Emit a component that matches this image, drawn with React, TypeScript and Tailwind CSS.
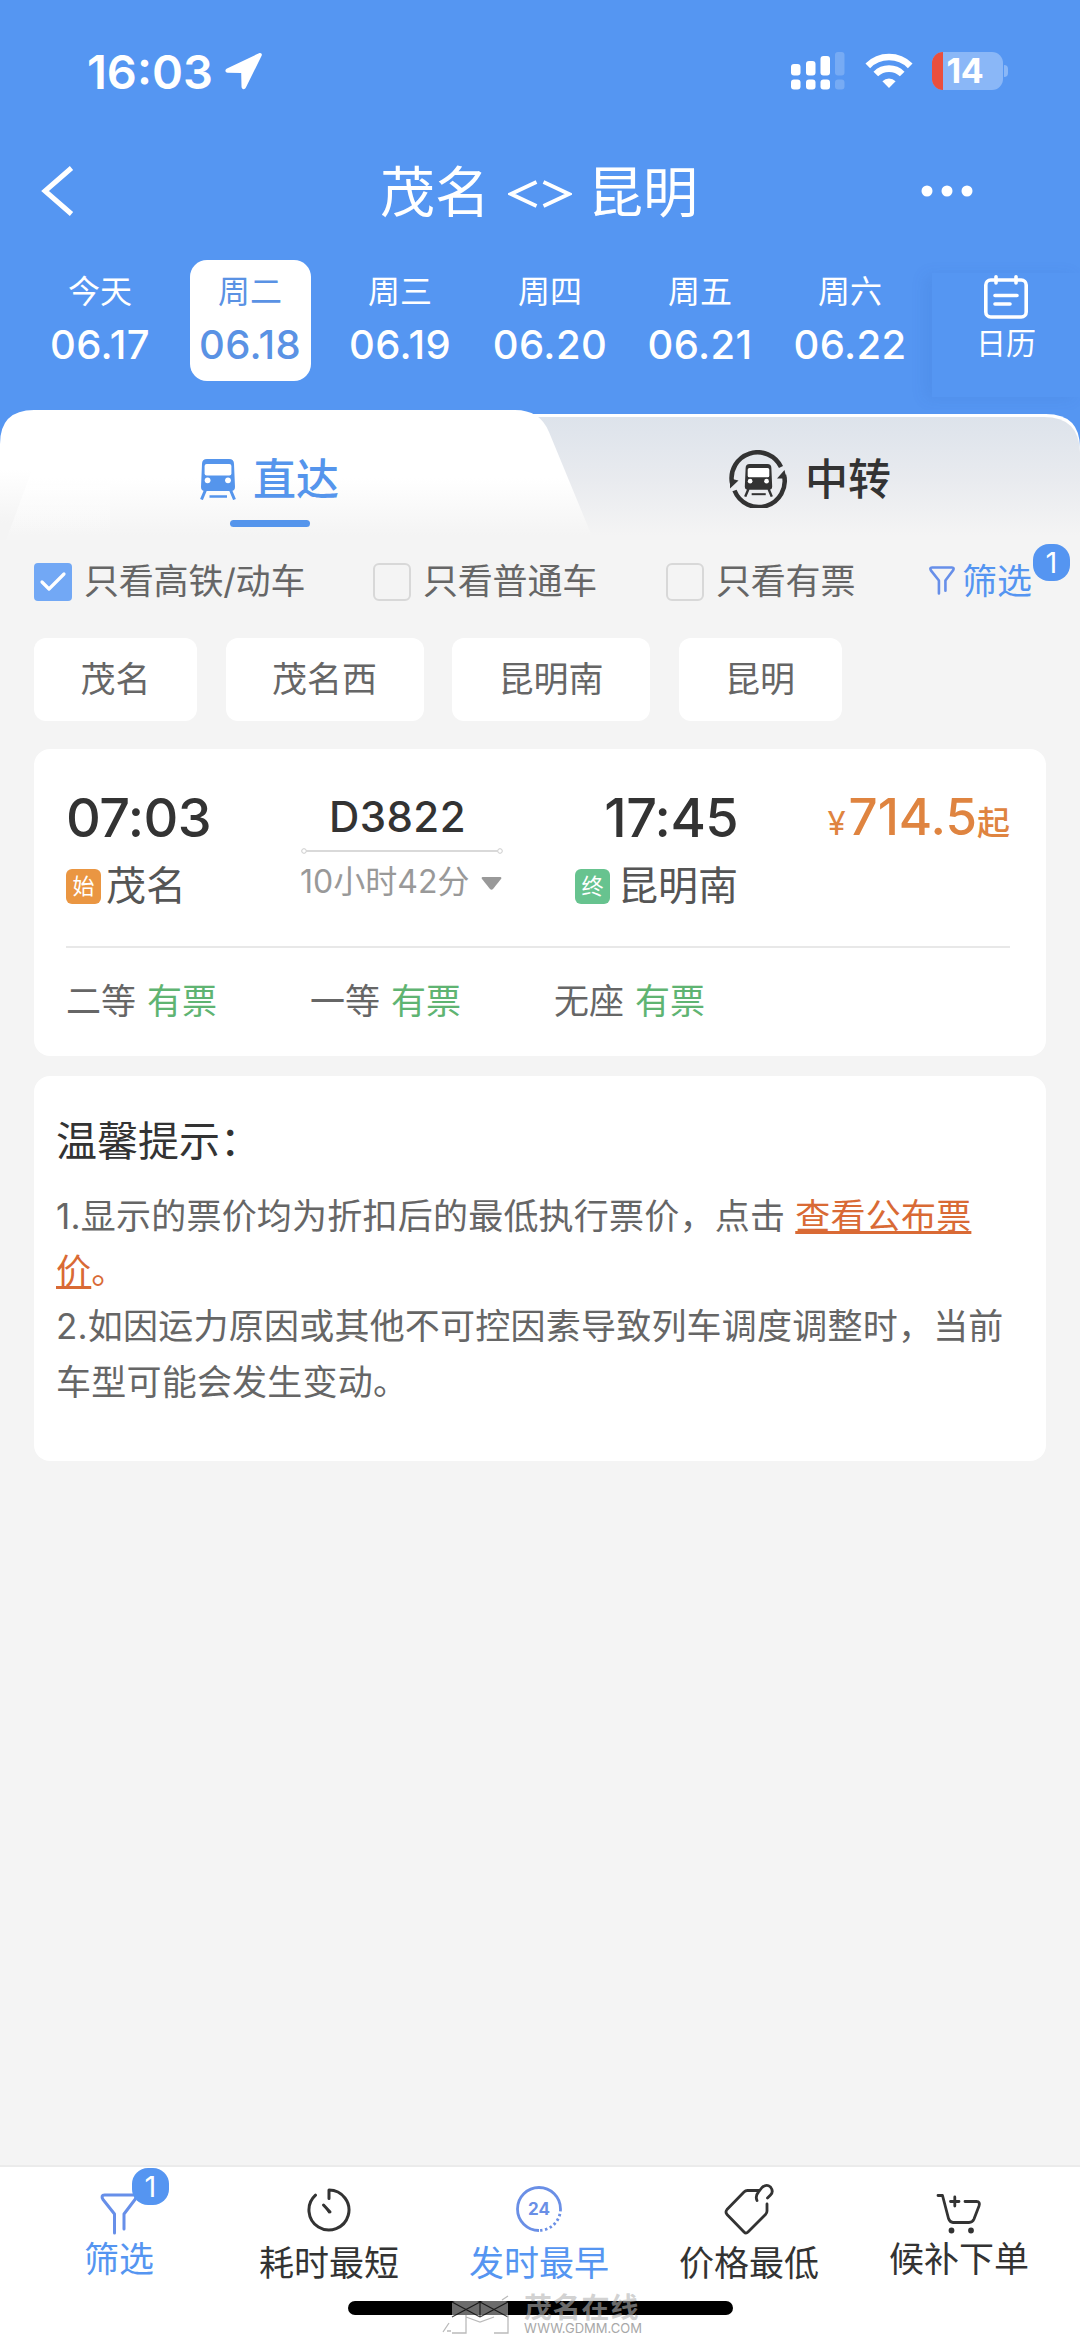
import { useState } from "react";
import clsx from "clsx";

const FECHAS = [
  { dia: "今天", fecha: "06.17" },
  { dia: "周二", fecha: "06.18" },
  { dia: "周三", fecha: "06.19" },
  { dia: "周四", fecha: "06.20" },
  { dia: "周五", fecha: "06.21" },
  { dia: "周六", fecha: "06.22" },
];

const ESTACIONES = ["茂名", "茂名西", "昆明南", "昆明"];

const ASIENTOS = ["二等", "一等", "无座"];

// ---------- status bar ----------

function StatusBar() {
  return (
    <div className="flex h-[142px] items-center pl-[87px] pr-[72px] text-white">
      <span className="w-[138px] pt-[2px] text-[47px] leading-[50px] font-semibold">16:03</span>
      <svg className="h-[38px] w-[38px]" viewBox="0 0 38 38" fill="#fff">
        <path d="M34 1.2 2 16.5C-.4 17.8 0 20.6 2.6 20.8L16.2 21 16.5 34.5C16.7 37.6 19.6 38 20.9 35.5L36.6 3.8C37.5 1.9 35.9 .3 34 1.2Z" />
      </svg>
      <svg className="mr-[1px] ml-auto h-[38px] w-[54px]" viewBox="0 0 54 38" fill="#fff">
        <rect x="0" y="12" width="9.5" height="11.5" rx="3" />
        <rect x="15" y="9" width="9.5" height="14.5" rx="3" />
        <rect x="29.5" y="4" width="9.5" height="19.5" rx="3" />
        <rect x="44" y="0" width="9.5" height="23.5" rx="3" opacity=".2" />
        <rect x="0" y="27.5" width="9.5" height="10" rx="3" />
        <rect x="15" y="27.5" width="9.5" height="10" rx="3" />
        <rect x="29.5" y="27.5" width="9.5" height="10" rx="3" />
        <rect x="44" y="27.5" width="9.5" height="10" rx="3" opacity=".2" />
      </svg>
      <svg className="ml-[19px] h-[36px] w-[48px]" viewBox="0 0 48 36" fill="none" stroke="#fff" strokeWidth="6.6">
        <path d="M2.800 12.800A30 30 0 0 1 45.200 12.800" />
        <path d="M10.800 21A18.800 18.800 0 0 1 37.200 21" />
        <path d="M24 35 17.400 28.300A9.400 9.400 0 0 1 30.600 28.300Z" fill="#fff" stroke="none" />
      </svg>
      <div className="ml-[19px] flex items-center">
        <div className="flex h-[38px] w-[71px] items-center rounded-[11px] bg-[#8ab7f7]">
          <div className="h-full w-[11px] rounded-l-[11px] bg-[#ea4f3d]" />
          <span className="ml-[4px] text-[34px] leading-[38px] font-bold tracking-[-0.5px]">14</span>
        </div>
        <div className="ml-[1.5px] h-[12px] w-[4px] rounded-r-full bg-[#8ab7f7]" />
      </div>
    </div>
  );
}

// ---------- icons ----------

function TrainIcon({ className, color }: { className: string; color: string }) {
  return (
    <svg className={className} viewBox="0 0 36 41" fill="none">
      <path d="M7 0H29Q34 0 34 5L35 28Q35 32 31 32H5Q1 32 1 28L2 5Q2 0 7 0Z" fill={color} />
      <rect x="4.6" y="5" width="26.8" height="11.5" rx="2" fill="#fff" />
      <circle cx="7.6" cy="21.3" r="2.9" fill="#fff" />
      <circle cx="28" cy="21.3" r="2.9" fill="#fff" />
      <path d="M5.5 31 1.5 40.500M30.500 31 34.500 40.500" stroke={color} strokeWidth="3" />
      <path d="M9.500 37.500H27" stroke={color} strokeWidth="2.5" />
    </svg>
  );
}

function TransferIcon() {
  return (
    <div className="relative flex h-[58px] w-[58px] items-center justify-center">
      <svg className="absolute inset-0 h-full w-full" viewBox="0 0 58 58" fill="none" stroke="#333" strokeWidth="4.5">
        <path d="M3 33A26 26 0 0 1 52 17" />
        <path d="M5.500 40.500A26 26 0 0 0 55 25" />
        <path d="M1 28.500V38.500L9.500 30.500ZM57.500 28.500 55.500 20 48 28.500Z" fill="#333" stroke="none" />
      </svg>
      <TrainIcon className="mt-[2px] h-[33px] w-[29px]" color="#333" />
    </div>
  );
}

function FunnelIcon({ className, stroke }: { className: string; stroke: number }) {
  return (
    <svg className={className} viewBox="0 0 38 42" fill="none" stroke="#678fe9" strokeWidth={stroke} strokeLinecap="round" strokeLinejoin="round">
      <path d="M14.500 40V21L3 6.500Q.500 2 4.500 2H33.500Q37.500 2 35 6.500L24 21V36" />
    </svg>
  );
}

function CalendarIcon() {
  return (
    <svg className="h-[44px] w-[44px]" viewBox="0 0 44 44" fill="none" stroke="#fff" strokeWidth="3.6" strokeLinecap="round">
      <rect x="1.8" y="5" width="40.4" height="37" rx="5" />
      <path d="M12 1.800V8M32 1.800V8M11 20.500H33M11 29H26" />
    </svg>
  );
}

function TimerIcon() {
  return (
    <svg className="h-[46px] w-[46px]" viewBox="0 0 46 46" fill="none" stroke="#333" strokeWidth="3" strokeLinecap="round">
      <path d="M23 11.500V3A20 20 0 1 1 9.500 8.200" strokeLinejoin="round" />
      <path d="M16.500 17 25 24.500 22.500 26.500Z" fill="#333" stroke="none" />
      <path d="M17.500 18 24 25" />
    </svg>
  );
}

function Clock24Icon() {
  return (
    <div className="relative flex h-[46px] w-[46px] items-center justify-center">
      <svg className="absolute inset-0 h-full w-full" viewBox="0 0 46 46" fill="none" stroke="#6a8fe6" strokeWidth="2.8">
        <path d="M23 44.500A21.500 21.500 0 1 1 44.500 23" />
        <path d="M44.500 23A21.500 21.500 0 0 1 23 44.500" strokeDasharray="2.4 2.6" />
      </svg>
      <span className="text-[17px] leading-[20px] font-bold text-[#6a8fe6]">24</span>
    </div>
  );
}

function TagIcon() {
  return (
    <svg className="h-[52px] w-[50px]" viewBox="0 0 50 52" fill="none" stroke="#333" strokeWidth="2.8" strokeLinecap="round" strokeLinejoin="round">
      <path d="M35 7.500H23.500Q21.500 7.500 20 9L3 26.500Q1 29 3 31.500L20 49Q22 51 24 49L41.500 31.500Q43 30 43 28V21" />
      <path d="M33 17.500Q31 13 34.500 9L38 4.500Q42.500 .500 46.500 4 50 8.500 46.500 12L43.500 15" />
    </svg>
  );
}

function CartIcon() {
  return (
    <svg className="h-[42px] w-[46px]" viewBox="0 0 46 42" fill="none" stroke="#333" strokeWidth="2.8" strokeLinecap="round" strokeLinejoin="round">
      <path d="M2 2.500H6.500L12.500 25.500Q14 29.500 17 29.500H33Q36.500 29.500 38 26L43 13Q44.500 8.500 40.500 8.500H29" />
      <path d="M14.500 8.500H23M18.800 4V13" />
      <circle cx="15.5" cy="37.5" r="1.5" fill="#333" />
      <circle cx="35" cy="37.5" r="1.5" fill="#333" />
    </svg>
  );
}

function Badge({ className }: { className: string }) {
  return (
    <span className={clsx("absolute flex h-[37px] w-[37px] items-center justify-center rounded-[16px] bg-[#5595f1] text-[29px] leading-[37px] text-white", className)}>
      1
    </span>
  );
}

// ---------- header ----------

function Header({ activa, onSelect }: { activa: number; onSelect: (i: number) => void }) {
  return (
    <header className="h-[410px] bg-[#5596f2]">
      <StatusBar />
      <div className="flex h-[98px] items-center pl-[40px] pr-[107px] text-white">
        <svg className="h-[50px] w-[35px]" viewBox="0 0 35 50" fill="none" stroke="#fff" strokeWidth="5">
          <path d="M31.500 2 5 25 31.500 48" />
        </svg>
        <h1 className="ml-[305px] flex w-[320px] items-center pt-[1px] text-[55px] leading-[60px] whitespace-nowrap">
          <span>茂名</span>
          <svg className="mt-[5px] mr-[16px] ml-[18px] h-[30px] w-[64px]" viewBox="0 0 64 30" fill="none" stroke="#fff" strokeWidth="3.8">
            <path d="M28.500 3 3 15 28.500 27M35.500 3 61 15 35.500 27" />
          </svg>
          <span>昆明</span>
        </h1>
        <svg className="ml-auto h-[12px] w-[52px]" viewBox="0 0 52 12" fill="#fff">
          <circle cx="6" cy="6" r="5.5" />
          <circle cx="26" cy="6" r="5.5" />
          <circle cx="46" cy="6" r="5.5" />
        </svg>
      </div>
      <div className="flex h-[170px] pl-[25px] text-white">
        {FECHAS.map((f, i) => (
          <button key={f.fecha} onClick={() => onSelect(i)} className="flex w-[150px] shrink-0 justify-center pt-[20px]">
            <div className={clsx("flex h-[121px] w-[121px] flex-col items-center rounded-[17px] pt-[12px]", i === activa && "bg-white text-[#5a92e4]")}>
              <span className="text-[32px] leading-[40px]">{f.dia}</span>
              <span className="mt-[9px] text-[40px] leading-[48px] font-medium tracking-[0.4px]">{f.fecha}</span>
            </div>
          </button>
        ))}
        <div className="mt-[33px] ml-[7px] flex h-[124px] w-[148px] shrink-0 flex-col items-center bg-[#5596f2] pt-[2px] shadow-[-7px_2px_14px_rgba(40,90,180,0.1)]">
          <CalendarIcon />
          <span className="mt-[4px] text-[30px] leading-[40px]">日历</span>
        </div>
      </div>
    </header>
  );
}

// ---------- tabs ----------

function TabBackground() {
  return (
    <svg className="absolute inset-0 h-full w-full" viewBox="0 0 1080 136" preserveAspectRatio="none">
      <defs>
        <linearGradient id="tabGray" x1="0" y1="0" x2="0" y2="1">
          <stop offset="0" stopColor="#dde3eb" />
          <stop offset=".5" stopColor="#e9ebef" />
          <stop offset=".92" stopColor="#f4f4f4" />
        </linearGradient>
        <linearGradient id="tabWhite" x1="0" y1="0" x2="0" y2="1">
          <stop offset=".5" stopColor="#fff" />
          <stop offset=".92" stopColor="#f4f4f4" />
        </linearGradient>
        <linearGradient id="tabSide" x1="0" y1="0" x2="0" y2="1">
          <stop offset="0" stopColor="#fff" />
          <stop offset=".7" stopColor="#f4f4f4" />
        </linearGradient>
        <linearGradient id="tabGlow" x1="0" y1="0" x2="0" y2="1">
          <stop offset="0" stopColor="#fff" stopOpacity=".5" />
          <stop offset="1" stopColor="#fff" stopOpacity=".1" />
        </linearGradient>
      </defs>
      <rect width="1080" height="70" fill="#5596f2" />
      <path d="M400 4H1046Q1080 4 1080 38V136H400Z" fill="#fff" />
      <path d="M400 7H1044Q1079 7 1080 42V136H400Z" fill="url(#tabGray)" />
      <path d="M0 34Q0 0 34 0H515Q540 0 549 22L596 136H0Z" fill="url(#tabWhite)" />
      <path d="M0 60H32L4 136H0Z" fill="url(#tabSide)" />
      <path d="M32 60H110V130H6Z" fill="url(#tabGlow)" />
    </svg>
  );
}

function Tabs() {
  return (
    <div className="relative h-[136px]">
      <TabBackground />
      <div className="relative flex h-[136px]">
        <div className="flex w-[540px] flex-col pl-[200px]">
          <div className="flex h-[94px] items-center pt-[44px]">
            <TrainIcon className="h-[41px] w-[36px]" color="#5595ec" />
            <span className="ml-[17px] text-[43px] leading-[50px] font-medium text-[#5595ec]">直达</span>
          </div>
          <div className="mt-[16px] ml-[30px] h-[7px] w-[80px] rounded-full bg-[#5595ec]" />
        </div>
        <div className="flex h-[94px] items-center pt-[44px] pl-[189px]">
          <TransferIcon />
          <span className="ml-[18px] text-[43px] leading-[50px] font-medium text-[#333]">中转</span>
        </div>
      </div>
    </div>
  );
}

// ---------- filters ----------

function Check({ label, checked, className }: { label: string; checked?: boolean; className?: string }) {
  return (
    <label className={clsx("flex shrink-0 items-center", className)}>
      {checked ? (
        <svg className="h-[38px] w-[38px] rounded-[4px] bg-[#72a8f5]" viewBox="0 0 38 38" fill="none" stroke="#fff" strokeWidth="3.2" strokeLinecap="round" strokeLinejoin="round">
          <path d="M8 19 15 26 30 11" />
        </svg>
      ) : (
        <span className="h-[38px] w-[38px] rounded-[6px] border-[2.5px] border-[#d8d8d8]" />
      )}
      <span className="mb-[3px] ml-[12px] text-[35px] leading-[44px] tracking-[-0.2px] whitespace-nowrap">{label}</span>
    </label>
  );
}

function Filters() {
  return (
    <div className="px-[34px] text-[#666]">
      <div className="flex h-[72px] items-center">
        <Check label="只看高铁/动车" checked className="w-[339px]" />
        <Check label="只看普通车" className="w-[293px]" />
        <Check label="只看有票" className="w-[263px]" />
        <div className="relative mb-[3px] flex items-center text-[#5595f1]">
          <FunnelIcon className="h-[29px] w-[26px]" stroke={3.8} />
          <span className="ml-[7px] text-[35px] leading-[44px] whitespace-nowrap">筛选</span>
          <Badge className="top-[-15px] left-[104px]" />
        </div>
      </div>
      <div className="mt-[20px] flex gap-[28.5px]">
        {ESTACIONES.map((e) => (
          <div key={e} className="flex h-[83px] items-center rounded-[12px] bg-white px-[46.5px] pb-[2px] text-[35px] leading-[44px]">
            {e}
          </div>
        ))}
      </div>
    </div>
  );
}

// ---------- train card ----------

function StationTag({ text, color }: { text: string; color: string }) {
  return (
    <span className={clsx("flex h-[35px] w-[35px] items-center justify-center rounded-[6px] text-[22px] leading-[35px] text-white", color)}>{text}</span>
  );
}

function TrainCard() {
  return (
    <div className="mx-[34px] mt-[28px] h-[307px] rounded-[16px] bg-white pr-[36px] pl-[32px]">
      <div className="flex h-[199px] border-b-2 border-[#e8e8e8] pt-[39px]">
        <div className="w-[234px]">
          <div className="h-[60px] text-[54px] leading-[60px] font-medium tracking-[-0.6px] text-[#333]">07:03</div>
          <div className="mt-[18px] flex items-center text-[40px] leading-[40px] text-[#555]">
            <StationTag text="始" color="bg-[#ea9642]" />
            <span className="ml-[5px]">茂名</span>
          </div>
        </div>
        <div className="flex w-[204px] flex-col items-center pt-[1px]">
          <div className="mr-[9px] h-[58px] text-[42px] leading-[56px] font-medium tracking-[0.4px] text-[#333]">D3822</div>
          <svg className="h-[8px] w-[204px]" viewBox="0 0 204 8" fill="none" stroke="#ccc">
            <circle cx="4" cy="4" r="2.3" />
            <circle cx="200" cy="4" r="2.3" />
            <path d="M6.500 4H197.500" strokeWidth="1.5" />
          </svg>
          <div className="mt-[7px] flex w-full items-center justify-between pr-[2px] text-[32px] leading-[40px] whitespace-nowrap text-[#999]">
            <span>10小时42分</span>
            <svg className="mt-[2px] h-[13px] w-[21px]" viewBox="0 0 21 13" fill="#999">
              <path d="M1.500 0H19.500Q21 .500 20 2L12 12Q10.500 13.500 9 12L1 2Q0 .500 1.500 0Z" />
            </svg>
          </div>
        </div>
        <div className="flex w-[234px] flex-col items-end">
          <div className="h-[60px] text-[54px] leading-[60px] font-medium tracking-[-0.6px] text-[#333]">17:45</div>
          <div className="mt-[18px] flex items-center text-[40px] leading-[40px] text-[#555]">
            <StationTag text="终" color="bg-[#67c38f]" />
            <span className="ml-[8px]">昆明南</span>
          </div>
        </div>
        <div className="ml-auto flex h-[60px] items-baseline pt-[1px] whitespace-nowrap text-[#df8440]">
          <span className="mr-[3px] text-[33px] leading-[56px]">¥</span>
          <span className="text-[51px] leading-[56px] font-medium">714.5</span>
          <span className="text-[33px] leading-[56px] font-medium">起</span>
        </div>
      </div>
      <div className="flex pt-[31px] text-[35px] leading-[44px] text-[#666]">
        {ASIENTOS.map((a) => (
          <div key={a} className="flex w-[244px] shrink-0 gap-[11px]">
            <span>{a}</span>
            <span className="text-[#5fb472]">有票</span>
          </div>
        ))}
      </div>
    </div>
  );
}

function Tips() {
  return (
    <div className="mx-[34px] mt-[20px] h-[385px] rounded-[16px] bg-white pt-[39px] pl-[22px] whitespace-nowrap">
      <h2 className="text-[41px] leading-[52px] text-[#333]">温馨提示：</h2>
      <div className="mt-[22px] text-[35px] leading-[55.2px] tracking-[0.22px] text-[#666]">
        <p>
          1.显示的票价均为折扣后的最低执行票价，点击{" "}
          <span className="text-[#d96a35]">
            <a className="underline decoration-[3px] underline-offset-[2px] [text-decoration-skip-ink:none]">
              查看公布票
              <br />价
            </a>
            。
          </span>
        </p>
        <p>
          2.如因运力原因或其他不可控因素导致列车调度调整时，当前
          <br />
          车型可能会发生变动。
        </p>
      </div>
    </div>
  );
}

// ---------- bottom navigation ----------

function BottomNav() {
  return (
    <nav className="relative mt-auto h-[172px] border-t-2 border-[#ebebeb] bg-white">
      <div className="flex px-[14px] pt-[1px] text-[35px] leading-[44px] text-[#333]">
        <div className="flex w-[210px] flex-col items-center text-[#5595f1]">
          <div className="relative mt-[25px] h-[44px]">
            <FunnelIcon className="h-[42px] w-[38px]" stroke={3} />
            <Badge className="top-[-25px] left-[32px]" />
          </div>
          <span>筛选</span>
        </div>
        <div className="flex w-[210px] flex-col items-center">
          <div className="mt-[19px] h-[54px]">
            <TimerIcon />
          </div>
          <span>耗时最短</span>
        </div>
        <div className="flex w-[210px] flex-col items-center text-[#5595f1]">
          <div className="mt-[18px] h-[55px]">
            <Clock24Icon />
          </div>
          <span>发时最早</span>
        </div>
        <div className="flex w-[210px] flex-col items-center">
          <div className="mt-[15px] h-[58px]">
            <TagIcon />
          </div>
          <span>价格最低</span>
        </div>
        <div className="flex w-[210px] flex-col items-center">
          <div className="mt-[25px] h-[44px]">
            <CartIcon />
          </div>
          <span>候补下单</span>
        </div>
      </div>
      <div className="absolute top-[134px] left-[348px] h-[14px] w-[385px] rounded-full bg-black" />
      <Watermark />
    </nav>
  );
}

function Watermark() {
  return (
    <div className="absolute top-[128px] left-[442px] flex">
      <svg className="h-[44px] w-[68px]" viewBox="0 0 68 44" fill="none">
        <path d="M10 7 24 2 38 7 52 2 66 7V20L52 22 38 27 24 22 10 20Z" fill="#fff" opacity=".42" />
        <path d="M10 7 38 22M38 7 10 22M38 7 66 22M66 7 38 22M38 7V22" stroke="#000" opacity=".75" strokeWidth="1.2" />
        <path d="M24 20V38H10M66 20V38H52M24 22 38 27 52 22M1 37 7 28M5 36H9M60 5 66 1" stroke="#bbb" strokeWidth="1.3" />
      </svg>
      <div className="ml-[14px] flex flex-col">
        <span className="h-[26px] text-[28px] leading-[26px] font-bold tracking-[0.8px] text-[#b4b4b4]/60">茂名在线</span>
        <span className="text-[13px] leading-[15px] text-[#a8a8a8]">WWW.GDMM.COM</span>
      </div>
    </div>
  );
}

function App() {
  const [activa, setActiva] = useState(1);

  return (
    <div className="flex h-[2337px] w-[1080px] flex-col overflow-hidden bg-[#f4f4f4] font-[Inter,'Noto_Sans_CJK_SC',sans-serif]">
      <Header activa={activa} onSelect={setActiva} />
      <Tabs />
      <Filters />
      <TrainCard />
      <Tips />
      <BottomNav />
    </div>
  );
}

export default App;
